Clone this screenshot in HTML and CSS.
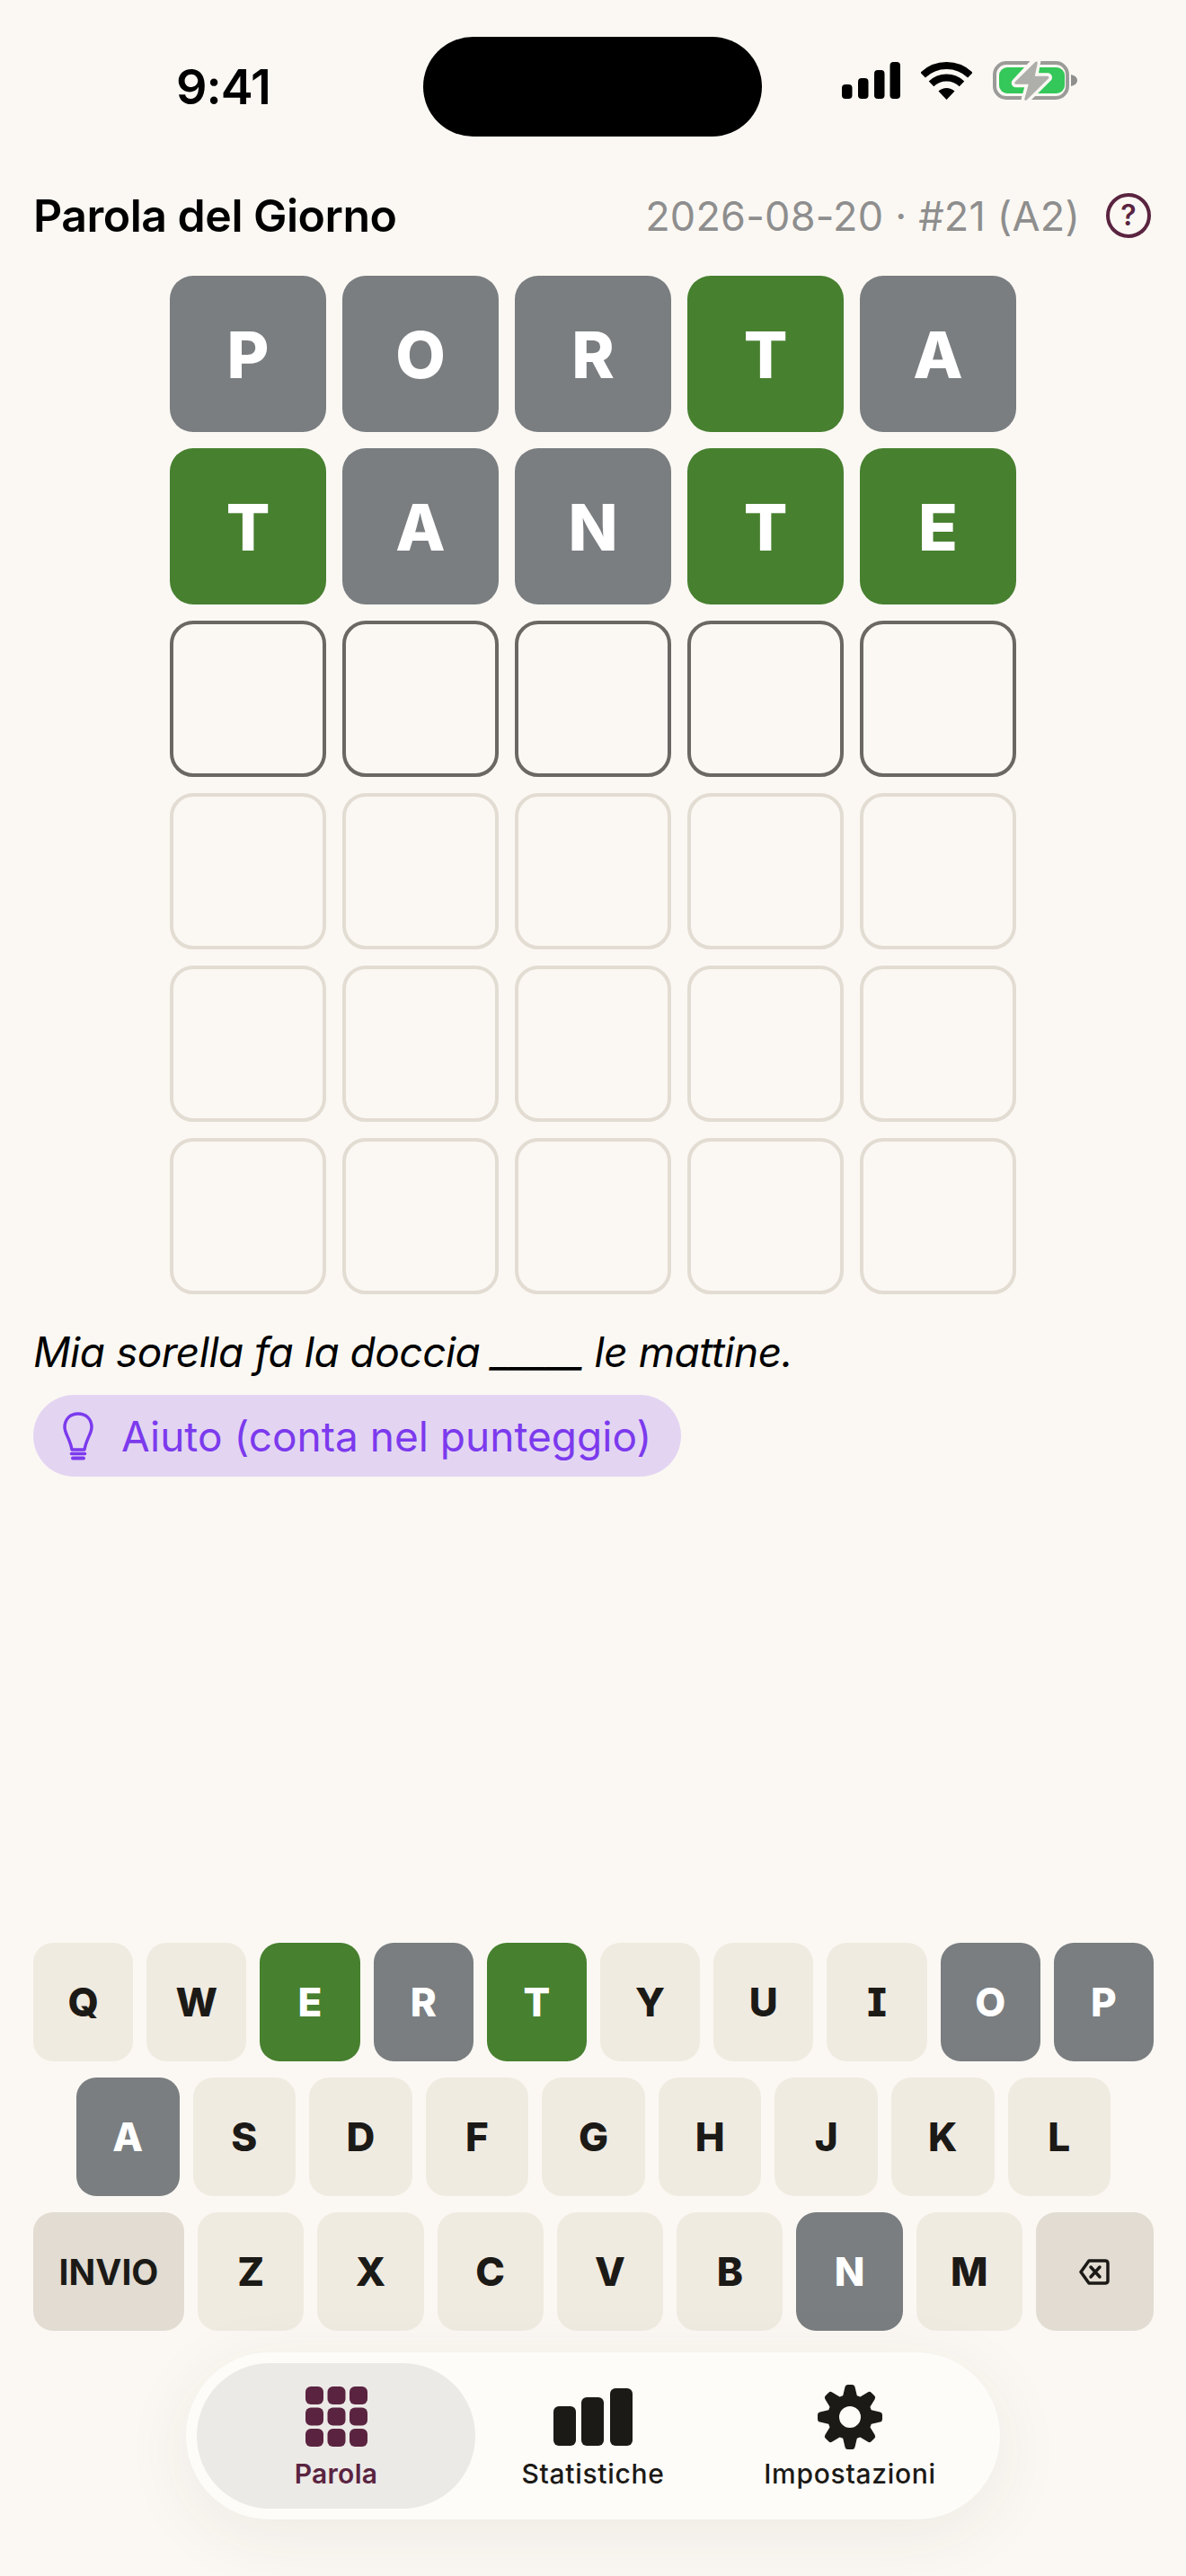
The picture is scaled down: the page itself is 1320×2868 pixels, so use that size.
FILE: index.html
```html
<!DOCTYPE html>
<html lang="it">
<head>
<meta charset="utf-8">
<title>Parola del Giorno</title>
<link rel="stylesheet" href="styles.css">
</head>
<body>
<div class="screen">

  <div class="status">
    <div class="clock">9:41</div>
    <div class="island"></div>
    <div class="status-icons">
      <svg class="ic-signal" viewBox="0 0 65 41"><rect x="0" y="25" width="11.5" height="16" rx="4"/><rect x="18" y="18" width="11.5" height="23" rx="4"/><rect x="36" y="9" width="11.5" height="32" rx="4"/><rect x="53.5" y="0" width="11.5" height="41" rx="4"/></svg>
      <svg class="ic-wifi" viewBox="0 0 57 42"><path d="M2.1 14.7A38 38 0 0 1 54.9 14.7" fill="none" stroke="#000" stroke-width="8"/><path d="M11.5 24.4A24.5 24.5 0 0 1 45.5 24.4" fill="none" stroke="#000" stroke-width="8"/><path d="M28.5 42L19.5 32.6A13 13 0 0 1 37.5 32.6Z"/></svg>
      <svg class="ic-battery" viewBox="0 0 94 48"><rect x="2" y="4" width="81" height="39" rx="13" fill="none" stroke="#9b9b99" stroke-width="4"/><rect x="7" y="9" width="73" height="29" rx="9" fill="#34c759"/><path d="M87 17c4 1 7 3 7 6.500s-3 5.500-7 6.500Z" fill="#8f8f8d"/><path d="M48.300 2L25.700 26.300H41.700L36.700 44.300L61 20.300H45Z" fill="#aeaeaa" stroke="#fbf8f3" stroke-width="10" stroke-linejoin="round"/><path d="M48.300 4L25.700 26.300H41.700L36.700 44.300L61 20.300H45Z" fill="#aeaeaa" stroke="#aeaeaa" stroke-width="3" stroke-linejoin="round"/></svg>
    </div>
  </div>

  <div class="head">
    <h1 class="title">Parola del Giorno</h1>
    <div class="meta">2026-08-20 · #21 (A2)</div>
    <div class="help">?</div>
  </div>

  <div class="board">
    <div class="tile miss">P</div><div class="tile miss">O</div><div class="tile miss">R</div><div class="tile hit">T</div><div class="tile miss">A</div>
    <div class="tile hit">T</div><div class="tile miss">A</div><div class="tile miss">N</div><div class="tile hit">T</div><div class="tile hit">E</div>
    <div class="tile active"></div><div class="tile active"></div><div class="tile active"></div><div class="tile active"></div><div class="tile active"></div>
    <div class="tile"></div><div class="tile"></div><div class="tile"></div><div class="tile"></div><div class="tile"></div>
    <div class="tile"></div><div class="tile"></div><div class="tile"></div><div class="tile"></div><div class="tile"></div>
    <div class="tile"></div><div class="tile"></div><div class="tile"></div><div class="tile"></div><div class="tile"></div>
  </div>

  <p class="sentence">Mia sorella fa la doccia _____ le mattine.</p>

  <div class="hint">
    <svg class="ic-bulb" viewBox="0 0 34 54" fill="none" stroke="#7c3aed" stroke-width="3.500" stroke-linecap="round" stroke-linejoin="round"><path d="M17 2C8 2 2 8 2 17C2 24 8 30 10 42H24C26 30 32 24 32 17C32 8 26 2 17 2Z"/><path d="M9.500 46.500H24.500"/><path d="M11 51.500H23" stroke-width="4"/></svg>
    <span>Aiuto (conta nel punteggio)</span>
  </div>

  <div class="keyboard">
    <div class="kb-row">
      <div class="key">Q</div><div class="key">W</div><div class="key hit">E</div><div class="key miss">R</div><div class="key hit">T</div><div class="key">Y</div><div class="key">U</div><div class="key key-i">I</div><div class="key miss">O</div><div class="key miss">P</div>
    </div>
    <div class="kb-row kb-row-mid">
      <div class="key miss">A</div><div class="key">S</div><div class="key">D</div><div class="key">F</div><div class="key">G</div><div class="key">H</div><div class="key">J</div><div class="key">K</div><div class="key">L</div>
    </div>
    <div class="kb-row">
      <div class="key key-enter">INVIO</div><div class="key">Z</div><div class="key">X</div><div class="key">C</div><div class="key">V</div><div class="key">B</div><div class="key miss">N</div><div class="key">M</div>
      <div class="key key-back">
        <svg class="ic-back" viewBox="0 0 34 29" fill="none" stroke="#1c1a17" stroke-width="3.500" stroke-linejoin="round"><path d="M11 2H29C31 2 32 3 32 5V24C32 26 31 27 29 27H11L2 14.500Z"/><path d="M13 9L23 20M23 9L13 20" stroke-linecap="round"/></svg>
      </div>
    </div>
  </div>

  <div class="tabbar">
    <div class="tab on">
      <svg class="ic-grid" viewBox="0 0 69 67"><rect x="0" y="0" width="20" height="20" rx="6"/><rect x="24.500" y="0" width="20" height="20" rx="6"/><rect x="49" y="0" width="20" height="20" rx="6"/><rect x="0" y="23.500" width="20" height="20" rx="6"/><rect x="24.500" y="23.500" width="20" height="20" rx="6"/><rect x="49" y="23.500" width="20" height="20" rx="6"/><rect x="0" y="47" width="20" height="20" rx="6"/><rect x="24.500" y="47" width="20" height="20" rx="6"/><rect x="49" y="47" width="20" height="20" rx="6"/></svg>
      <span>Parola</span>
    </div>
    <div class="tab">
      <svg class="ic-bars" viewBox="0 0 88 64"><rect x="0" y="20" width="25" height="44" rx="6"/><rect x="31" y="10" width="25" height="54" rx="6"/><rect x="63" y="0" width="25" height="64" rx="6"/></svg>
      <span>Statistiche</span>
    </div>
    <div class="tab">
      <svg class="ic-gear" viewBox="-36 -36 72 72">
        <defs><path id="tooth" d="M-8 -23L-5.500 -33.500Q-5 -36 -2.500 -36H2.500Q5 -36 5.500 -33.500L8 -23Z"/></defs>
        <circle r="18.500" fill="none" stroke="#1c1a17" stroke-width="13"/>
        <use href="#tooth"/><use href="#tooth" transform="rotate(45)"/><use href="#tooth" transform="rotate(90)"/><use href="#tooth" transform="rotate(135)"/><use href="#tooth" transform="rotate(180)"/><use href="#tooth" transform="rotate(225)"/><use href="#tooth" transform="rotate(270)"/><use href="#tooth" transform="rotate(315)"/>
      </svg>
      <span>Impostazioni</span>
    </div>
  </div>

</div>
</body>
</html>
```

FILE: styles.css
```css
html, body { margin: 0; padding: 0; }

body {
  background: #fbf8f3;
  color: #000;
  font-family: Inter, "Liberation Sans", sans-serif;
}

.screen {
  height: 2868px;
  display: flex;
  flex-direction: column;
  overflow: hidden;
}

/* status bar */
.status {
  height: 111px;
  margin-top: 41px;
  display: flex;
  align-items: center;
  position: relative;
}
.clock {
  width: 471px;
  padding-left: 26px;
  text-align: center;
  font-size: 54px;
  font-weight: 600;
  letter-spacing: -1px;
  box-sizing: border-box;
}
.island {
  width: 377px;
  height: 111px;
  border-radius: 56px;
  background: #000;
}
.status-icons {
  display: flex;
  align-items: center;
  height: 48px;
  margin: 0 0 14px 89px;
}
.ic-signal { width: 65px; height: 41px; margin-right: 23px; }
.ic-wifi { width: 57px; height: 42px; margin-right: 23px; }
.ic-battery { width: 94px; height: 48px; }

/* header */
.head {
  display: flex;
  align-items: center;
  margin: 63px 39px 0 37px;
  height: 50px;
}
.title {
  margin: 0;
  flex: 1;
  font-size: 50px;
  font-weight: 600;
  letter-spacing: -0.5px;
}
.meta {
  font-size: 45px;
  letter-spacing: 0.2px;
  color: #8e8e8e;
  margin-right: 29px;
}
.help {
  width: 50px;
  height: 50px;
  box-sizing: border-box;
  border: 4px solid #5a2440;
  border-radius: 50%;
  color: #5a2440;
  font-size: 32px;
  font-weight: 600;
  line-height: 42px;
  text-align: center;
}

/* board */
.board {
  display: grid;
  grid-template-columns: repeat(5, 174px);
  grid-auto-rows: 174px;
  gap: 18px;
  justify-content: center;
  margin-top: 42px;
}
.tile {
  box-sizing: border-box;
  border: 4px solid #e2dcd3;
  border-radius: 26px;
  display: flex;
  align-items: center;
  justify-content: center;
  font-size: 72px;
  font-weight: 800;
  color: #fff;
}
.tile.active { border-color: #6b6763; }
.tile.miss { background: #7a7e81; border: 0; }
.tile.hit { background: #47802f; border: 0; }

/* clue */
.sentence {
  margin: 36px 0 0 37px;
  font-size: 46px;
  font-style: italic;
  letter-spacing: -0.5px;
  line-height: 56px;
}
.hint {
  align-self: flex-start;
  display: flex;
  align-items: center;
  height: 91px;
  margin: 20px 0 0 37px;
  padding: 0 33px;
  border-radius: 46px;
  background: #e3d5f2;
  color: #7c3aed;
  font-size: 46px;
}
.ic-bulb { width: 34px; height: 54px; margin-right: 31px; }

/* keyboard */
.keyboard {
  margin: auto 36px 0 37px;
  display: flex;
  flex-direction: column;
  gap: 18px;
}
.kb-row { display: flex; gap: 15px; }
.kb-row-mid { padding: 0 48px; }
.key {
  flex: 1 1 0;
  height: 132px;
  border-radius: 22px;
  background: #f0ebe1;
  color: #1c1a17;
  display: flex;
  align-items: center;
  justify-content: center;
  font-size: 44px;
  font-weight: 800;
}
.key.hit { background: #47802f; color: #fff; }
.key.miss { background: #7a7e81; color: #fff; }
.key-i { font-feature-settings: "cv08"; }
.key-enter {
  flex: 0 0 168px;
  background: #e2dcd2;
  font-size: 39px;
  font-weight: 700;
}
.key-back { flex: 0 0 131px; background: #e2dcd2; }
.ic-back { width: 34px; height: 29px; }

/* tab bar */
.tabbar {
  position: relative;
  align-self: center;
  display: flex;
  width: 906px;
  height: 186px;
  box-sizing: border-box;
  padding: 12px;
  margin: 24px 0 63px;
  border-radius: 93px;
  background: #fdfcf9;
  box-shadow: 0 16px 80px rgba(60, 50, 40, 0.07);
}
.tab {
  flex: 0 0 310px;
  border-radius: 81px;
  display: flex;
  flex-direction: column;
  align-items: center;
  justify-content: flex-end;
  padding-bottom: 21px;
  box-sizing: border-box;
  color: #1c1a17;
  fill: #1c1a17;
  font-size: 30px;
  font-weight: 500;
  letter-spacing: 0.7px;
}
.tab + .tab { margin-left: -24px; }
.tab.on {
  background: #eceae7;
  color: #5a2440;
  fill: #5a2440;
  font-weight: 600;
  letter-spacing: 0.3px;
}
.ic-grid { width: 69px; height: 67px; margin-bottom: 12px; }
.ic-bars { width: 88px; height: 64px; margin-bottom: 13px; }
.ic-gear { width: 72px; height: 72px; margin-bottom: 9px; }
```
